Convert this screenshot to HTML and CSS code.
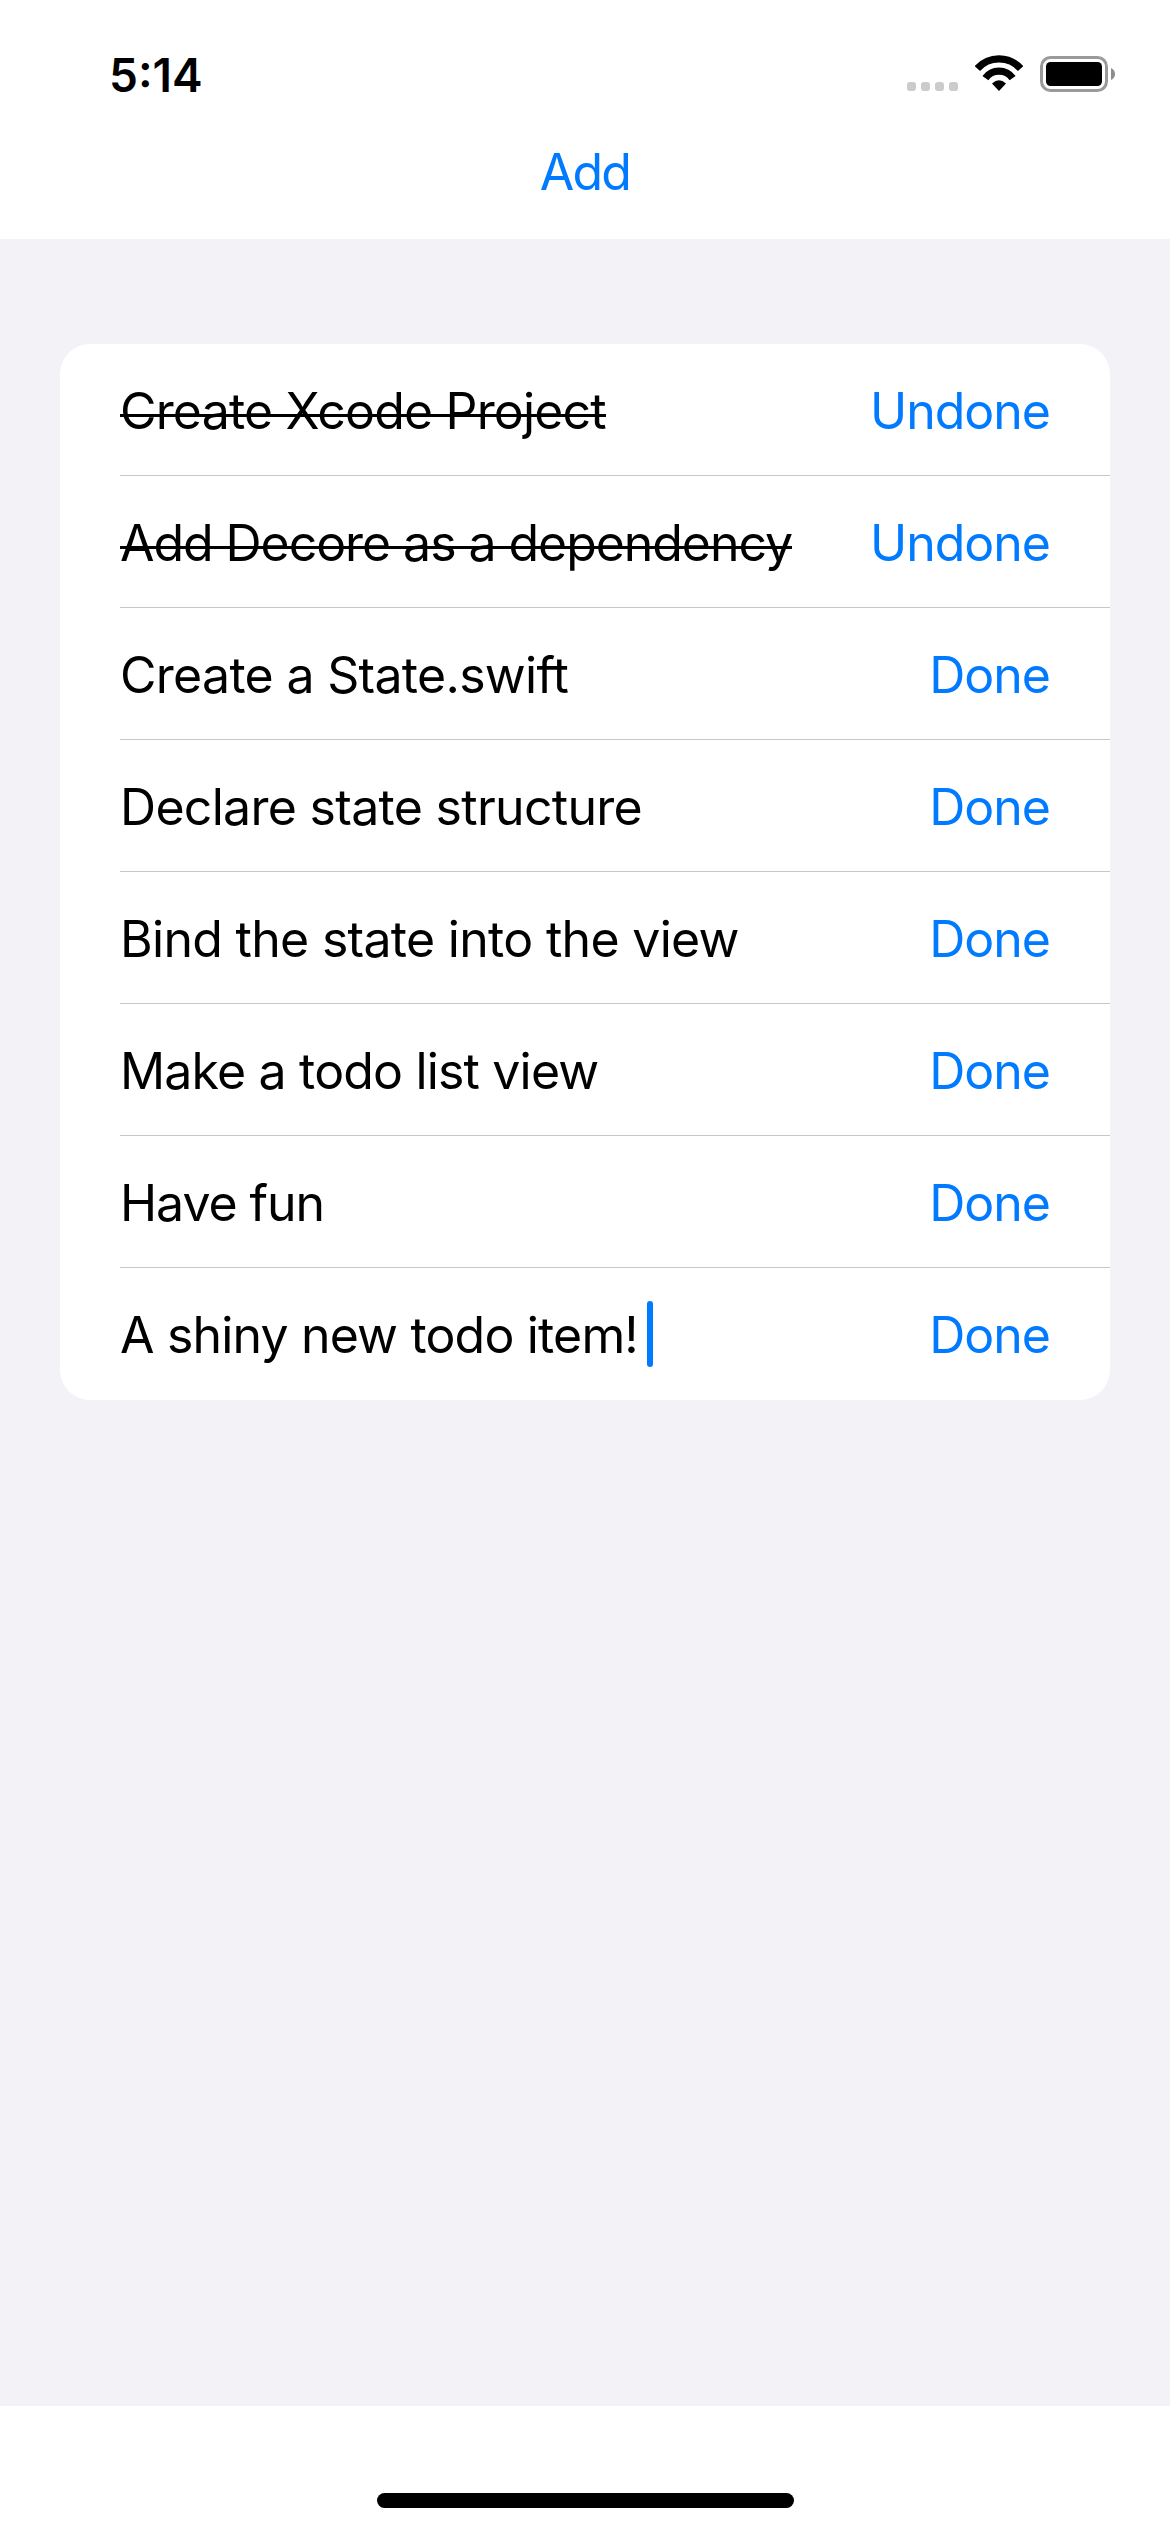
FILE: index.html
```html
<!DOCTYPE html>
<html lang="en">
<head>
<meta charset="utf-8">
<title>Todo</title>
<link rel="stylesheet" href="styles.css">
</head>
<body>
<div class="screen">
  <header class="top">
    <div class="status">
      <span class="clock">5:14</span>
      <div class="indicators">
        <div class="cellular"><i></i><i></i><i></i><i></i></div>
        <svg class="wifi" viewBox="0 0 48 36" width="48" height="36">
          <path d="M2.4 13.6A29 29 0 0 1 45.6 13.6M10.4 23.1A16.7 16.7 0 0 1 37.6 23.1" fill="none" stroke="#000" stroke-width="7.3"/>
          <path d="M17 28.6Q24 22 31 28.6L24 36Z"/>
        </svg>
        <svg class="battery" viewBox="0 0 75 36" width="75" height="36">
          <rect x="1.5" y="1.5" width="65" height="33" rx="9" fill="none" stroke="#9a9a9a" stroke-width="3"/>
          <rect x="6" y="6" width="56" height="24" rx="4.5"/>
          <path d="M71 12Q75 14 75 18T71 24Z" fill="#8c8c8c"/>
        </svg>
      </div>
    </div>
    <button class="link add">Add</button>
  </header>
  <main class="content">
    <ul class="list">
      <li class="row"><span class="title done">Create Xcode Project</span><button class="link">Undone</button></li>
      <li class="row"><span class="title done tight">Add Decore as a dependency</span><button class="link">Undone</button></li>
      <li class="row"><span class="title loose">Create a State.swift</span><button class="link">Done</button></li>
      <li class="row"><span class="title loose">Declare state structure</span><button class="link">Done</button></li>
      <li class="row"><span class="title loose">Bind the state into the view</span><button class="link">Done</button></li>
      <li class="row"><span class="title">Make a todo list view</span><button class="link">Done</button></li>
      <li class="row"><span class="title tight">Have fun</span><button class="link">Done</button></li>
      <li class="row"><span class="title">A shiny new todo item!</span><i class="caret"></i><button class="link">Done</button></li>
    </ul>
  </main>
  <footer class="bottom"><div class="home"></div></footer>
</div>
</body>
</html>
```
FILE: styles.css
```css
* { box-sizing: border-box; }
body { margin: 0; background: #fff; color: #000; font: 400 50px/60px Inter, "Liberation Sans", sans-serif; }
.screen { display: flex; flex-direction: column; width: 1170px; height: 2532px; }
.top { display: flex; flex: none; flex-direction: column; align-items: center; height: 239px; }
.status { display: flex; justify-content: space-between; align-items: flex-start; align-self: stretch; height: 140px; padding: 47px 55px 0 109px; }
.clock { font-size: 46px; font-weight: 600; line-height: 56px; }
.indicators { display: flex; align-items: flex-end; padding-top: 8px; }
.cellular { display: flex; gap: 5px; margin-right: 17px; padding-bottom: 1px; }
.cellular i { width: 9px; height: 9px; border-radius: 3px; background: #cbcbcb; }
.wifi { display: block; margin-right: 17px; margin-bottom: 1px; }
.battery { display: block; }
.title { padding-top: 2px; letter-spacing: -0.83px; white-space: nowrap; }
.title.tight { letter-spacing: -1.06px; }
.title.loose { letter-spacing: -0.7px; }
.link { margin: 0; padding: 2px 0 0; border: 0; background: none; color: #007aff; font: inherit; letter-spacing: -1px; }
.link.add { letter-spacing: -1.8px; }
.content { flex: 1; padding: 105px 60px 0; background: #f2f2f7; }
.list { margin: 0; padding: 0 0 0 60px; list-style: none; background: #fff; border-radius: 30px; }
.row { display: flex; align-items: center; height: 132px; padding: 1px 60px 0 0; border-bottom: 1px solid #c6c6c8; }
.row:last-child { border-bottom-color: transparent; }
.row .link { margin-left: auto; }
.done { position: relative; }
.done::after { content: ""; position: absolute; top: 35px; left: 0; width: 100%; height: 3px; background: #000; }
.caret { width: 6px; height: 66px; margin-left: 9px; border-radius: 3px; background: #007aff; }
.bottom { display: flex; flex: none; justify-content: center; align-items: flex-end; height: 126px; padding-bottom: 24px; }
.home { width: 417px; height: 15px; border-radius: 8px; background: #000; }
```
